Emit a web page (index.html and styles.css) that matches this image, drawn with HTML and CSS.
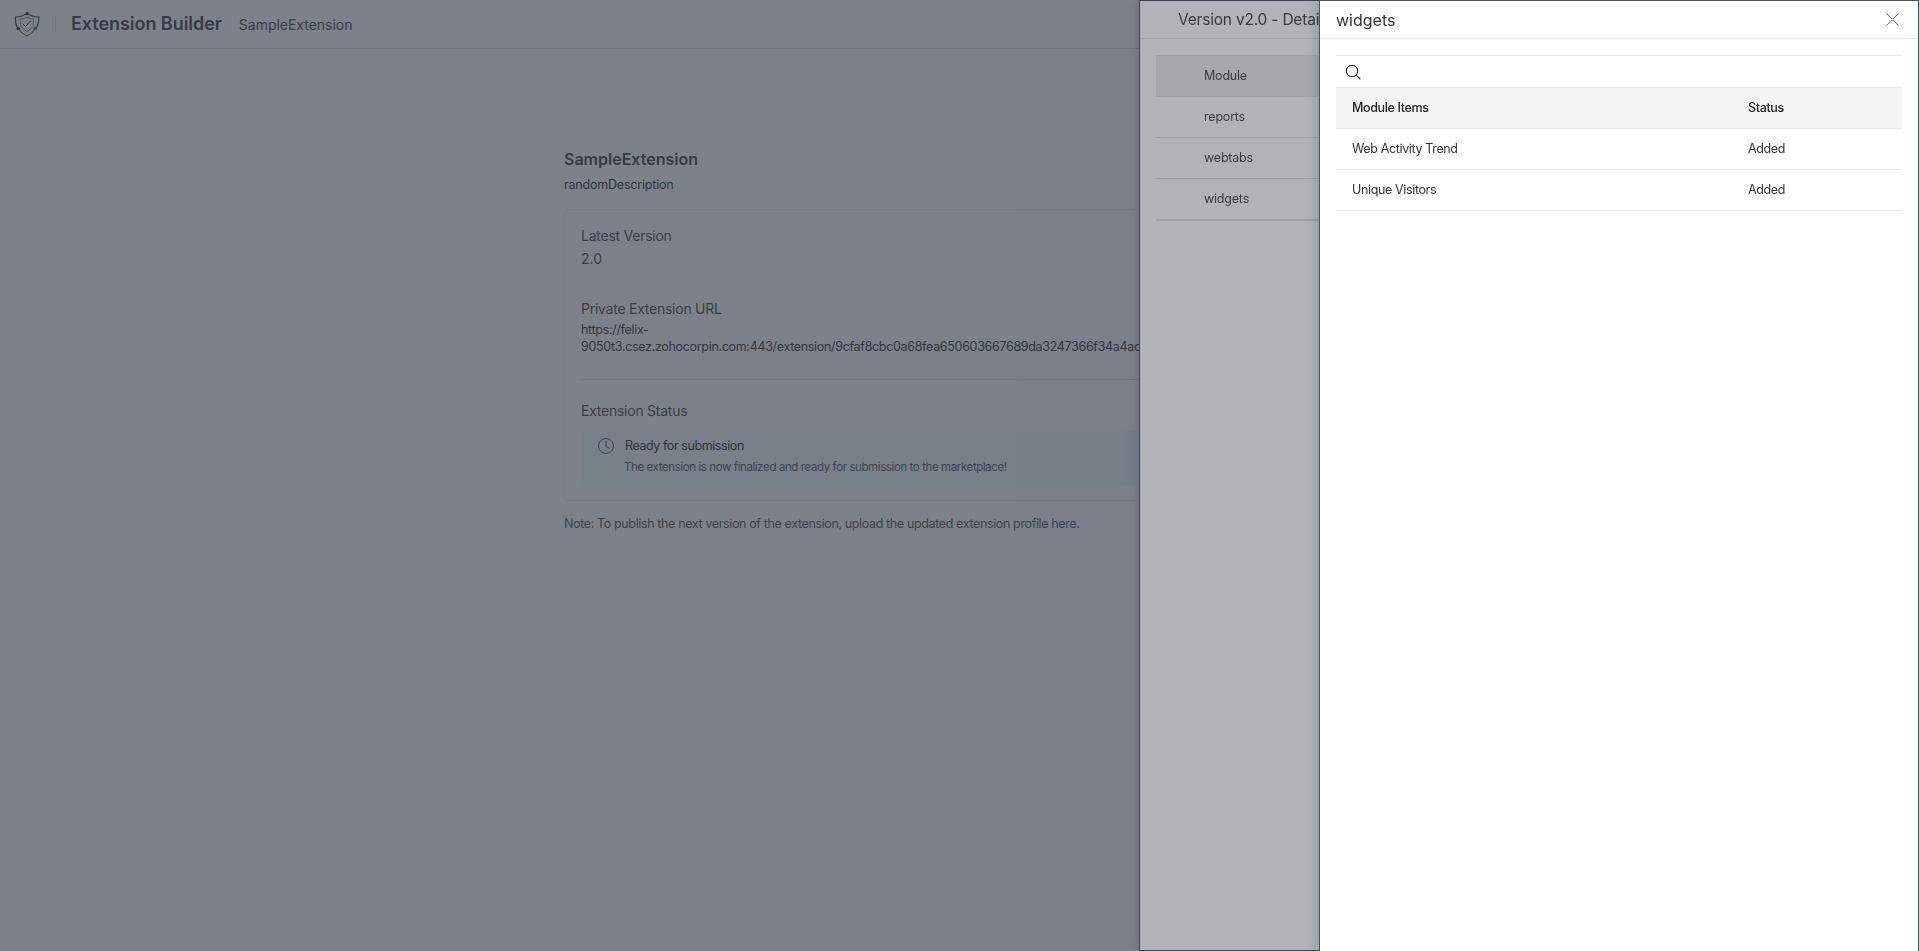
FILE: index.html
```html
<!DOCTYPE html>
<html lang="en">
<head>
<meta charset="utf-8">
<title>Extension Builder</title>
<link rel="stylesheet" href="styles.css">
</head>
<body>
<div class="page">
  <header class="topbar">
    <svg class="logo" width="26" height="26" viewBox="0 0 26 26" fill="none" stroke-width="1.2" stroke-linecap="round">
      <path d="M13 2.5 C9.5 4.8 5.5 6 1.5 6 C1.2 10.5 2 14.5 4 17.5" stroke="#55503f"/>
      <path d="M13 2.5 C16.5 4.8 20.5 6 24.8 6 C25 10 24.2 14 22 17.5" stroke="#4a5d7c"/>
      <path d="M4.5 18 C6.8 21 9.5 23.3 13 25 C16.5 23.3 19 21 21 18" stroke="#7b6c4d"/>
      <circle cx="13" cy="2.6" r="1.6" fill="#3f4a60" stroke="none"/>
      <circle cx="4.3" cy="17.6" r="1.7" fill="#33363f" stroke="none"/>
      <circle cx="21.3" cy="17.6" r="1.7" fill="#7b6c4d" stroke="none"/>
      <path d="M9 13 L11.5 15.5 L16.5 10" stroke="#4b505c" stroke-width="1"/>
      <path d="M6.5 8 C9 8 11 7.3 13 6.4 C15 7.3 17 8 19.5 8 V13.5 C19.5 16 16.5 18.5 13 20.5 C9.5 18.5 6.5 16 6.5 13.5 Z" stroke="#6a6f7a" stroke-width=".7"/>
    </svg>
    <span class="topbar-sep"></span>
    <h1 class="app-name">Extension Builder</h1>
    <span class="ext-name">SampleExtension</span>
  </header>
  <main class="content">
    <h2 class="ext-title">SampleExtension</h2>
    <p class="ext-desc">randomDescription</p>
    <section class="card">
      <div class="field-label">Latest Version</div>
      <div class="field-value">2.0</div>
      <div class="field-label url-label">Private Extension URL</div>
      <div class="url">https://felix-<br>9050t3.csez.zohocorpin.com:443/extension/9cfaf8cbc0a68fea650603667689da3247366f34a4ac</div>
      <hr class="divider">
      <div class="field-label">Extension Status</div>
      <div class="status-box">
        <div class="status-head">
          <svg class="clock" width="18" height="18" viewBox="0 0 18 18" fill="none" stroke="#56687f" stroke-width="1">
            <circle cx="9" cy="9" r="7.5"/>
            <path d="M9 4 V9.5 L12.5 11.5"/>
          </svg>
          <span class="status-title">Ready for submission</span>
        </div>
        <div class="status-text">The extension is now finalized and ready for submission to the marketplace!</div>
      </div>
    </section>
    <p class="note">Note: To publish the next version of the extension, upload the updated extension profile <span class="link">here</span>.</p>
  </main>
</div>
<div class="scrim"></div>
<aside class="drawer drawer-version">
  <div class="drawer-head version-head">Version v2.0 - Details</div>
  <div class="version-body">
    <div class="vrow vrow-head">Module</div>
    <div class="vrow">reports</div>
    <div class="vrow">webtabs</div>
    <div class="vrow vrow-last">widgets</div>
  </div>
</aside>
<div class="scrim"></div>
<aside class="drawer drawer-items">
  <div class="drawer-head items-head">
    <span>widgets</span>
    <svg class="close" width="13" height="13" viewBox="0 0 13 13" fill="none" stroke="#6a6d74" stroke-width="1">
      <path d="M.5 .5 L12.5 12.5 M12.5 .5 L.5 12.5"/>
    </svg>
  </div>
  <div class="items-body">
    <div class="search">
      <svg width="16" height="16" viewBox="0 0 16 16" fill="none" stroke="#222" stroke-width="1.1" stroke-linecap="round">
        <circle cx="7" cy="7" r="5.7"/>
        <path d="M11.2 11.2 L15 15"/>
      </svg>
    </div>
    <div class="irow irow-head"><span class="icol-name">Module Items</span><span>Status</span></div>
    <div class="irow"><span class="icol-name">Web Activity Trend</span><span>Added</span></div>
    <div class="irow"><span class="icol-name">Unique Visitors</span><span>Added</span></div>
  </div>
</aside>
</body>
</html>
```
FILE: styles.css
```css
* { box-sizing: border-box; }
html, body { margin: 0; height: 100%; overflow: hidden; }
body { font-family: Inter, "Liberation Sans", sans-serif; background: #fff; color: #222; }
.page { height: 951px; background: #fff; }
.topbar { height: 49px; display: flex; align-items: center; border-bottom: 1px solid #d9dbe3; padding-left: 14px; }
.logo { flex: none; }
.topbar-sep { width: 1px; height: 16px; background: #dfe1e6; margin-left: 15px; }
.app-name { margin: 0 0 0 15px; font-size: 18px; font-weight: 600; line-height: 24px; letter-spacing: -.05px; color: #58585f; }
.ext-name { margin-left: 17px; font-size: 14px; letter-spacing: -.02px; color: #5c5c5c; }
.content { width: 791px; margin-left: 564px; padding-top: 100px; }
.ext-title { margin: 0; font-size: 16px; font-weight: 600; line-height: 20px; color: #58585f; }
.ext-desc { margin: 8px 0 0; font-size: 12.5px; line-height: 16px; letter-spacing: -.2px; color: #4c4c4c; }
.card { margin-top: 16px; height: 292px; padding: 16px; border: 1px solid #f0f1f3; border-radius: 3px; }
.field-label { font-size: 14px; line-height: 20px; letter-spacing: -.25px; color: #5c5c5c; }
.field-value { margin-top: 3px; font-size: 14px; line-height: 20px; color: #5c5c5c; }
.url-label { margin-top: 30px; }
.url { margin-top: 2px; font-size: 12.5px; line-height: 17px; letter-spacing: -.32px; color: #4c4c4c; white-space: nowrap; }
.divider { margin: 24px 0 21px; border: 0; border-top: 1px solid #e2e3e8; }
.status-box { margin-top: 10px; height: 54px; padding: 6px 16px; background: #f3f9fe; border-radius: 3px; }
.status-head { display: flex; align-items: center; gap: 10px; }
.status-title { font-size: 12.5px; line-height: 18px; letter-spacing: -.42px; color: #4c4c4c; }
.status-text { margin: 4px 0 0 27px; font-size: 11.5px; line-height: 16px; letter-spacing: -.4px; color: #6c6c6c; }
.note { margin: 15px 0 0; font-size: 12.5px; line-height: 16px; letter-spacing: -.37px; color: #666; }
.link { color: #4a6f9e; }
.scrim { position: fixed; inset: 0; background: rgba(29, 38, 52, .35); }
.drawer { position: fixed; top: 0; bottom: 0; right: 0; background: #fff; border: 1px solid #4d5260; box-shadow: -4px 0 10px rgba(0, 0, 0, .12); }
.drawer-version { left: 1139px; }
.drawer-items { left: 1319px; border-bottom: 0; }
.drawer-head { height: 38px; border-bottom: 1px solid #e5e5e5; display: flex; align-items: center; font-size: 16px; color: #333; }
.version-head { padding-left: 38px; font-size: 15.5px; letter-spacing: -.2px; white-space: nowrap; color: #484848; }
.items-head { padding: 0 19px 0 16px; justify-content: space-between; }
.version-body { padding: 16px 16px 0; }
.vrow { height: 41px; padding-left: 48px; padding-bottom: 1px; display: flex; align-items: center; font-size: 12.5px; letter-spacing: -.2px; color: #484848; border-bottom: 1px solid #e0e0e0; }
.vrow-head { background: #eee; border-top: 1px solid #e0e0e0; height: 42px; }
.vrow-last { height: 42px; border-bottom: 2px solid #e0e0e0; }
.items-body { padding: 16px 16px 0; }
.search { height: 33px; border-top: 1px solid #e6e6e6; border-bottom: 1px solid #e6e6e6; display: flex; align-items: center; padding-left: 9px; }
.irow { height: 41px; padding-bottom: 1px; display: flex; align-items: center; font-size: 12.5px; letter-spacing: -.36px; color: #333; padding-left: 16px; border-bottom: 1px solid #e6e6e6; }
.irow-head { background: #f4f4f4; color: #222; font-weight: 500; }
.icol-name { width: 396px; }
```
